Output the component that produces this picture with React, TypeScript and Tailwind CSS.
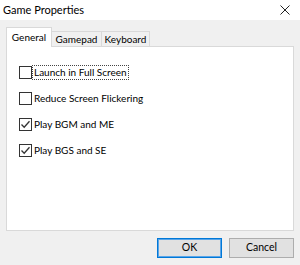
const font = { fontFamily: 'Lato, "Noto Sans", sans-serif' };

function Check({ label, checked, focused }: { label: string; checked?: boolean; focused?: boolean }) {
  return (
    <div className="flex h-[13px] items-center">
      <span className="flex h-[13px] w-[13px] shrink-0 items-center justify-center border border-[#333333] bg-white">
        {checked && (
          <svg width="11" height="11" viewBox="0 0 11 11">
            <path d="M1.5 5.5 L4.2 8.3 L9.5 2.2" fill="none" stroke="#333333" strokeWidth="1.3" />
          </svg>
        )}
      </span>
      <span
        className={
          'ml-px px-px text-[10px] leading-[13px] text-black ' +
          (focused ? 'outline outline-1 outline-dotted outline-[#444]' : '')
        }
      >
        {label}
      </span>
    </div>
  );
}

export default function App() {
  return (
    <div className="flex h-[265px] w-[300px] flex-col bg-[#f0f0f0] text-[10px]" style={font}>
      <div className="flex h-[20px] items-center justify-between bg-white pl-[3px] pr-[10px]">
        <span className="text-[11px] text-black">Game Properties</span>
        <svg width="10" height="10" viewBox="0 0 10 10">
          <path d="M0.5 0.5 L9.5 9.5 M9.5 0.5 L0.5 9.5" stroke="#222" strokeWidth="1" />
        </svg>
      </div>

      <div className="flex flex-col px-[6px] pt-[7px]">
        <div className="relative z-10 flex items-end">
          <div className="-mb-px flex h-[20px] w-[46px] items-start justify-center border border-b-0 border-[#d9d9d9] bg-white pt-[2px]">
            General
          </div>
          <div className="flex h-[15px] w-[50px] items-center justify-center border border-l-0 border-b-0 border-[#d9d9d9] bg-[#f0f0f0]">
            Gamepad
          </div>
          <div className="flex h-[15px] w-[48px] items-center justify-center border border-l-0 border-b-0 border-[#d9d9d9] bg-[#f0f0f0]">
            Keyboard
          </div>
        </div>
        <div className="flex h-[185px] flex-col gap-[13px] border border-[#d9d9d9] bg-white pl-[12px] pt-[19px]">
          <Check label="Launch in Full Screen" focused />
          <Check label="Reduce Screen Flickering" />
          <Check label="Play BGM and ME" checked />
          <Check label="Play BGS and SE" checked />
        </div>
      </div>

      <div className="flex justify-end gap-[7px] pr-[6px] pt-[7px]">
        <button className="flex h-[20px] w-[65px] items-center justify-center border border-[#0078d7] bg-[#e1e1e1] text-[10.5px] text-black shadow-[inset_0_0_0_1px_#5aa5e8]">
          OK
        </button>
        <button className="flex h-[20px] w-[65px] items-center justify-center border border-[#adadad] bg-[#e1e1e1] text-[10.5px] text-black">
          Cancel
        </button>
      </div>
    </div>
  );
}
